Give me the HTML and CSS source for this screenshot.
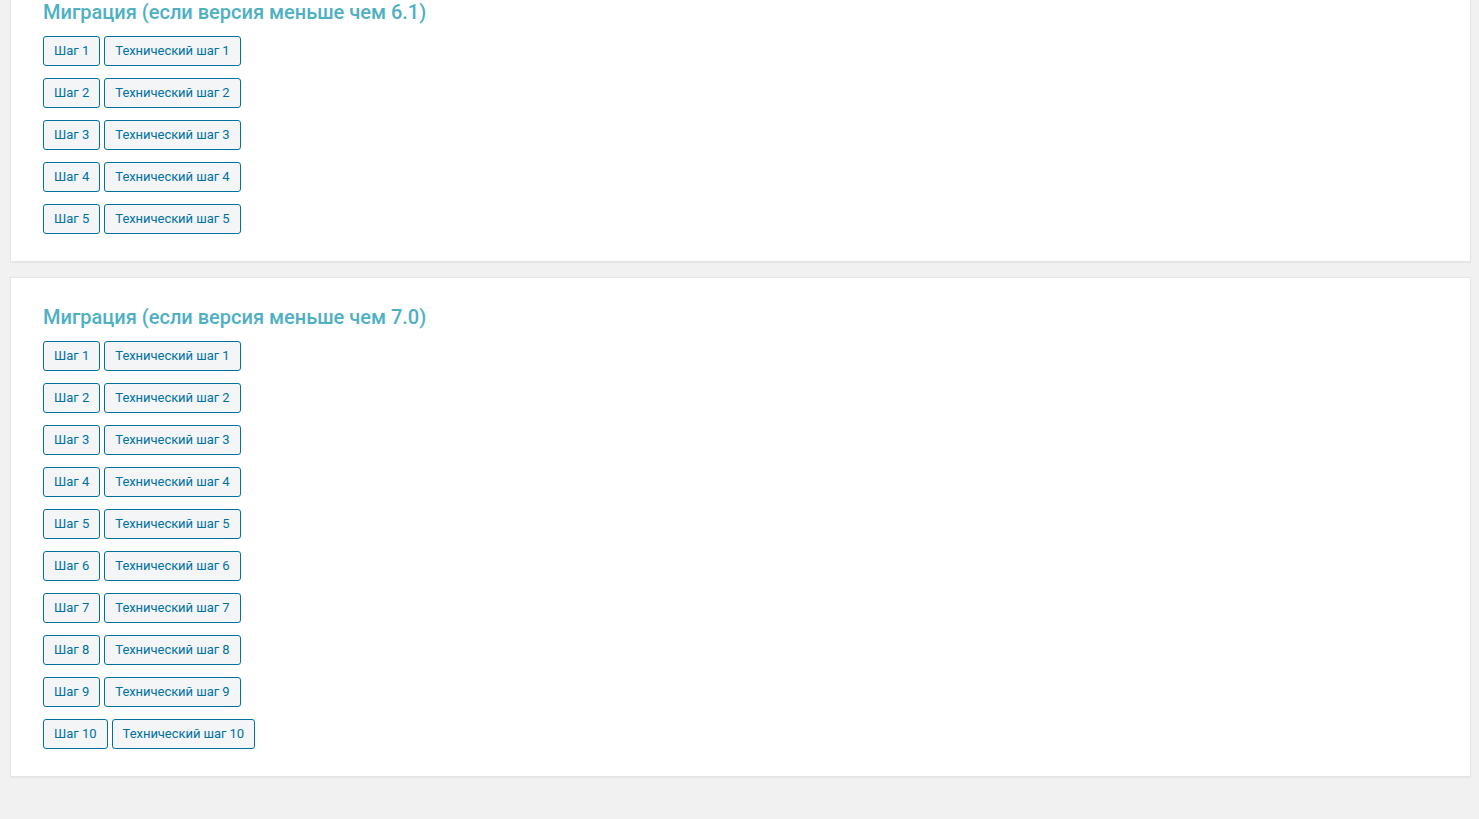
FILE: index.html
```html
<!DOCTYPE html>
<html lang="ru">
<head>
    <meta charset="UTF-8">
    <meta name="viewport" content="width=device-width, initial-scale=1.0">
    <title>Миграция</title>
    <link rel="stylesheet" href="styles.css">
</head>
<body>
    <div class="wrap">
        <div class="card">
            <h2>Миграция (если версия меньше чем 6.1)</h2>
            <div class="step"><button class="button">Шаг 1</button><button class="button">Технический шаг 1</button></div>
            <div class="step"><button class="button">Шаг 2</button><button class="button">Технический шаг 2</button></div>
            <div class="step"><button class="button">Шаг 3</button><button class="button">Технический шаг 3</button></div>
            <div class="step"><button class="button">Шаг 4</button><button class="button">Технический шаг 4</button></div>
            <div class="step"><button class="button">Шаг 5</button><button class="button">Технический шаг 5</button></div>
        </div>
        <div class="card">
            <h2>Миграция (если версия меньше чем 7.0)</h2>
            <div class="step"><button class="button">Шаг 1</button><button class="button">Технический шаг 1</button></div>
            <div class="step"><button class="button">Шаг 2</button><button class="button">Технический шаг 2</button></div>
            <div class="step"><button class="button">Шаг 3</button><button class="button">Технический шаг 3</button></div>
            <div class="step"><button class="button">Шаг 4</button><button class="button">Технический шаг 4</button></div>
            <div class="step"><button class="button">Шаг 5</button><button class="button">Технический шаг 5</button></div>
            <div class="step"><button class="button">Шаг 6</button><button class="button">Технический шаг 6</button></div>
            <div class="step"><button class="button">Шаг 7</button><button class="button">Технический шаг 7</button></div>
            <div class="step"><button class="button">Шаг 8</button><button class="button">Технический шаг 8</button></div>
            <div class="step"><button class="button">Шаг 9</button><button class="button">Технический шаг 9</button></div>
            <div class="step"><button class="button">Шаг 10</button><button class="button">Технический шаг 10</button></div>
        </div>
    </div>
</body>
</html>
```

FILE: styles.css
```css
* {
    margin: 0;
    padding: 0;
    box-sizing: border-box;
    font-family: Roboto, 'Liberation Sans', sans-serif;
}

body {
    background: #f1f1f1;
}

.wrap {
    margin-top: -28px;
    padding: 0 8px 0 10px;
}

.card {
    background: #fff;
    border: 1px solid #e5e5e5;
    box-shadow: 0 1px 1px rgba(0,0,0,0.04);
    padding: 27px 32px 15px;
    margin-bottom: 15px;
}

h2 {
    color: #4eb0c3;
    font-size: 20px;
    font-weight: 500;
    line-height: 24px;
    margin-bottom: 12px;
}

.step {
    display: flex;
    gap: 4px;
    margin-bottom: 12px;
}

.step .button:last-child {
    letter-spacing: -0.05px;
}

.button {
    height: 30px;
    padding: 0 10px;
    font-size: 13px;
    line-height: 28px;
    color: #0071a1;
    border: 1px solid #0071a1;
    border-radius: 3px;
    background: #f3f5f6;
    cursor: pointer;
}

.button:hover {
    background: #f1f1f1;
    color: #016087;
}
```
